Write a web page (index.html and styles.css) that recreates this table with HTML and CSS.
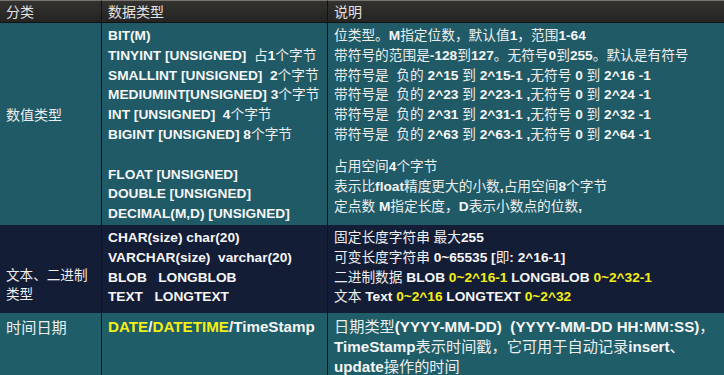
FILE: index.html
```html
<!DOCTYPE html>
<html lang="zh">
<head>
<meta charset="utf-8">
<title>MySQL 数据类型</title>
<link rel="stylesheet" href="styles.css">
</head>
<body>
<table class="types">
  <colgroup>
    <col class="c1">
    <col class="c2">
    <col class="c3">
  </colgroup>
  <thead>
    <tr>
      <th>分类</th>
      <th>数据类型</th>
      <th>说明</th>
    </tr>
  </thead>
  <tbody>
    <tr class="num">
      <td class="cat cat-num">数值类型</td>
      <td>
        <div class="ln"><b>BIT(M)</b></div>
        <div class="ln"><b>TINYINT [UNSIGNED]&nbsp;&nbsp;</b>占<b>1</b>个字节</div>
        <div class="ln"><b>SMALLINT [UNSIGNED]&nbsp;&nbsp;2</b>个字节</div>
        <div class="ln"><b>MEDIUMINT[UNSIGNED] 3</b>个字节</div>
        <div class="ln"><b>INT [UNSIGNED]&nbsp;&nbsp;4</b>个字节</div>
        <div class="ln"><b>BIGINT [UNSIGNED] 8</b>个字节</div>
        <div class="ln">&nbsp;</div>
        <div class="ln"><b>FLOAT [UNSIGNED]</b></div>
        <div class="ln"><b>DOUBLE [UNSIGNED]</b></div>
        <div class="ln"><b>DECIMAL(M,D) [UNSIGNED]</b></div>
      </td>
      <td>
        <div class="ln">位类型。<b>M</b>指定位数，默认值<b>1</b>，范围<b>1-64</b></div>
        <div class="ln">带符号的范围是<b>-128</b>到<b>127</b>。无符号<b>0</b>到<b>255</b>。默认是有符号</div>
        <div class="ln">带符号是&nbsp;&nbsp;负的 <b>2^15</b> 到 <b>2^15-1 ,</b>无符号 <b>0</b> 到 <b>2^16 -1</b></div>
        <div class="ln">带符号是&nbsp;&nbsp;负的 <b>2^23</b> 到 <b>2^23-1 ,</b>无符号 <b>0</b> 到 <b>2^24 -1</b></div>
        <div class="ln">带符号是&nbsp;&nbsp;负的 <b>2^31</b> 到 <b>2^31-1 ,</b>无符号 <b>0</b> 到 <b>2^32 -1</b></div>
        <div class="ln">带符号是&nbsp;&nbsp;负的 <b>2^63</b> 到 <b>2^63-1 ,</b>无符号 <b>0</b> 到 <b>2^64 -1</b></div>
        <div class="group">
          <div class="ln">占用空间<b>4</b>个字节</div>
          <div class="ln">表示比<b>float</b>精度更大的小数<b>,</b>占用空间<b>8</b>个字节</div>
          <div class="ln">定点数 <b>M</b>指定长度，<b>D</b>表示小数点的位数<b>,</b></div>
        </div>
      </td>
    </tr>
    <tr class="text">
      <td class="cat cat-text">文本、二进制<br>类型</td>
      <td>
        <div class="ln"><b>CHAR(size) char(20)</b></div>
        <div class="ln"><b>VARCHAR(size)&nbsp;&nbsp;varchar(20)</b></div>
        <div class="ln"><b>BLOB&nbsp;&nbsp;&nbsp;LONGBLOB</b></div>
        <div class="ln"><b>TEXT&nbsp;&nbsp;&nbsp;LONGTEXT</b></div>
      </td>
      <td>
        <div class="ln">固定长度字符串 最大<b>255</b></div>
        <div class="ln">可变长度字符串 <b>0~65535 [</b>即<b>: 2^16-1]</b></div>
        <div class="ln">二进制数据 <b>BLOB <span class="hl">0~2^16-1</span> LONGBLOB <span class="hl">0~2^32-1</span></b></div>
        <div class="ln">文本 <b>Text <span class="hl">0~2^16</span> LONGTEXT <span class="hl">0~2^32</span></b></div>
      </td>
    </tr>
    <tr class="date">
      <td class="cat cat-date">时间日期</td>
      <td>
        <div class="ln"><b><span class="hl">DATE</span>/<span class="hl">DATETIME</span>/TimeStamp</b></div>
      </td>
      <td>
        <div class="ln">日期类型<b>(YYYY-MM-DD)&nbsp;&nbsp;(YYYY-MM-DD HH:MM:SS)</b>，</div>
        <div class="ln"><b>TimeStamp</b>表示时间戳，它可用于自动记录<b>insert</b>、</div>
        <div class="ln"><b>update</b>操作的时间</div>
      </td>
    </tr>
  </tbody>
</table>
</body>
</html>
```

FILE: styles.css
```css
html, body {
  margin: 0;
  padding: 0;
  background: #1f5d69;
  overflow: hidden;
}

.types {
  width: 724px;
  table-layout: fixed;
  border-collapse: separate;
  border-spacing: 0;
  font-family: "Liberation Sans", "Noto Sans CJK SC", sans-serif;
  font-size: 13.7px;
  color: #eeeeee;
}

.c1 { width: 101px; }
.c2 { width: 226px; }
.c3 { width: 397px; }

th {
  height: 22px;
  box-sizing: border-box;
  padding: 0 6px 1px;
  text-align: left;
  font-weight: normal;
  font-size: 14px;
  line-height: 20px;
  color: #e2e2e2;
  background: linear-gradient(#34322f, #262422);
  border-top: 1px solid #77746f;
  border-bottom: 1px solid #0d1416;
  font-family: "Noto Sans CJK SC", sans-serif;
}

th + th,
td + td {
  border-left: 1px solid #0c161a;
}

td {
  vertical-align: top;
  padding: 3px 6px 1px;
  line-height: 19.8px;
  white-space: nowrap;
}

b {
  font-weight: bold;
  color: #f6f6f6;
}

.hl { color: #f4ee14; }

.ln { height: 19.8px; }

.group { margin-top: 12.5px; }

.num td { background: #1f5a66; }
.text td { background: #141d36; padding-bottom: 6px; }
.date td { background: #1f5d69; font-size: 15.2px; padding-top: 4px; }

.cat {
  font-family: "Noto Sans CJK SC", sans-serif;
  font-size: 14px;
}
.cat-num { padding-top: 82px; }
.text .cat-text { padding-top: 40px; font-size: 13.6px; line-height: 19px; }
.date .cat-date { font-size: 15.2px; }
```
